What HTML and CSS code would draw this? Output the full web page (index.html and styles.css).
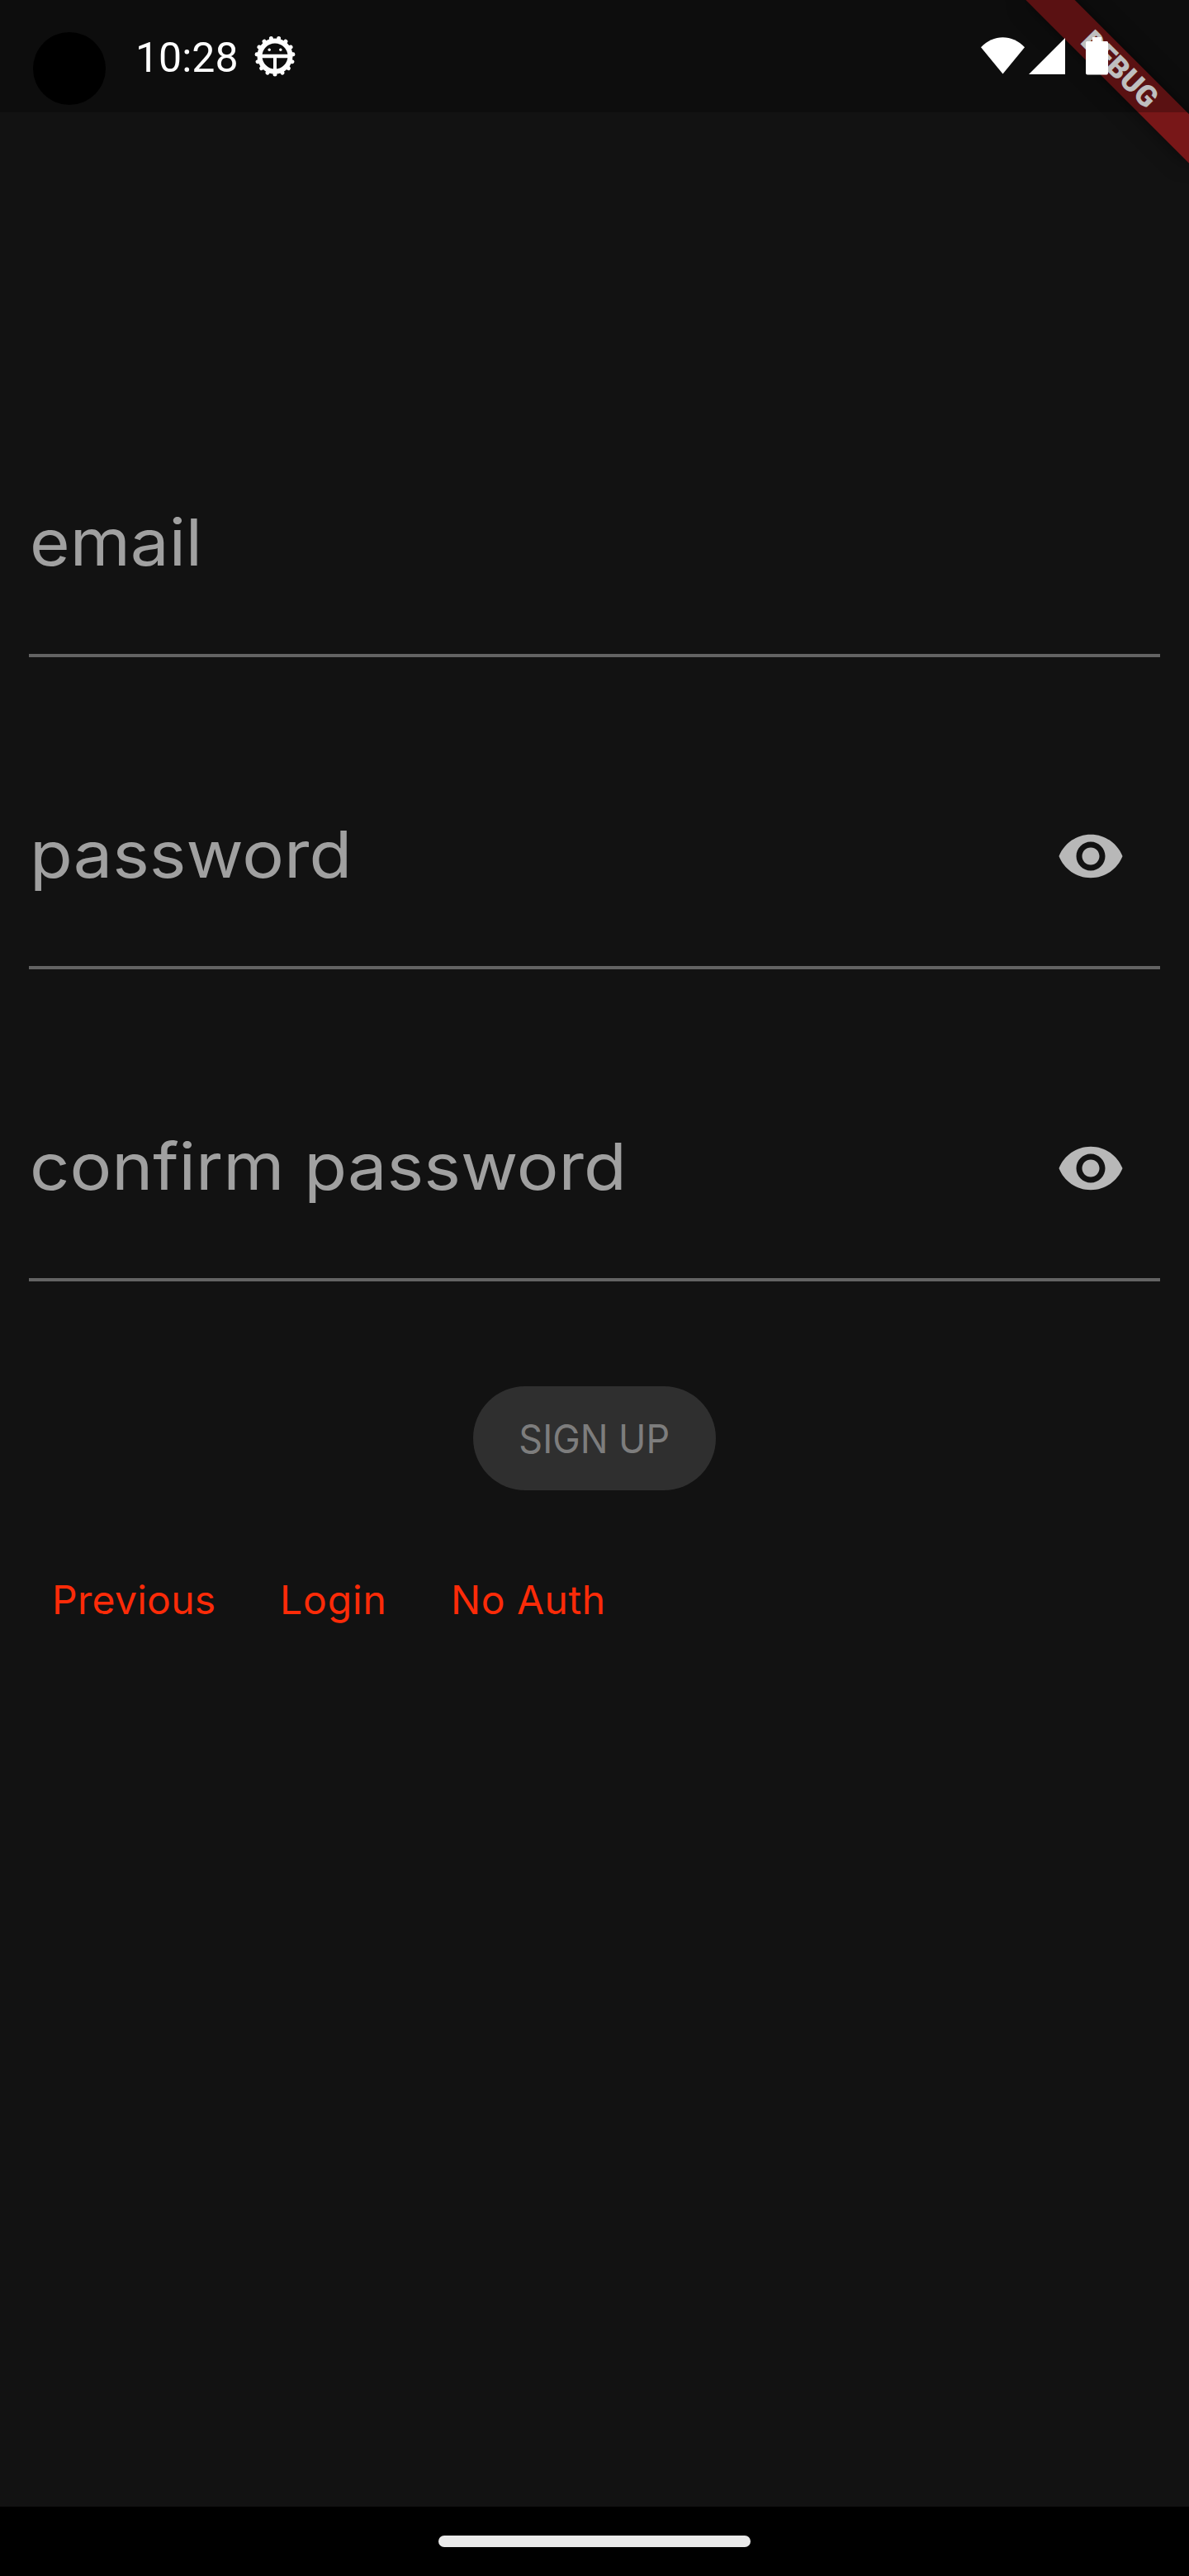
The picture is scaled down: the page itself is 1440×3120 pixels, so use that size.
FILE: index.html
```html
<!DOCTYPE html>
<html lang="en">
<head>
<meta charset="utf-8">
<title>Sign up</title>
<link rel="stylesheet" href="styles.css">
</head>
<body>
<div class="screen">
  <div class="debug-banner"><span>DEBUG</span></div>
  <header class="status-bar">
    <div class="camera"></div>
    <time class="clock">10:28</time>
    <svg class="gear" viewBox="-26 -26 52 52">
      <circle r="18.500" fill="none" stroke="#fff" stroke-width="6"/>
      <g stroke="#fff" stroke-width="5" stroke-linecap="round">
        <path id="tooth" d="M0 19V22"/>
        <use href="#tooth" transform="rotate(24)"/><use href="#tooth" transform="rotate(48)"/>
        <use href="#tooth" transform="rotate(72)"/><use href="#tooth" transform="rotate(96)"/>
        <use href="#tooth" transform="rotate(120)"/><use href="#tooth" transform="rotate(144)"/>
        <use href="#tooth" transform="rotate(168)"/><use href="#tooth" transform="rotate(192)"/>
        <use href="#tooth" transform="rotate(216)"/><use href="#tooth" transform="rotate(240)"/>
        <use href="#tooth" transform="rotate(264)"/><use href="#tooth" transform="rotate(288)"/>
        <use href="#tooth" transform="rotate(312)"/><use href="#tooth" transform="rotate(336)"/>
      </g>
      <path d="M-17 -2.200H17V2.200H2V17H-2V2.200H-17Z" fill="#fff"/>
      <circle cx="-6.800" cy="-7.700" r="1.700" fill="#fff"/><circle cx="6.800" cy="-7.700" r="1.700" fill="#fff"/>
    </svg>
    <svg class="indicators" viewBox="0 0 160 50" fill="#fff">
      <path d="M8 17.300C23 1.200 46 1.200 61 17.300L34.500 49.500Z"/>
      <path d="M66 50L110 6V50Z"/>
      <path d="M143 5h11v5h6.500q1.500 0 1.500 1.500v37q0 2-2 2h-23q-2 0-2-2v-37q0-1.500 1.500-1.500h6.500z"/>
    </svg>
  </header>
  <main class="form">
    <div class="field"><span class="label email">email</span></div>
    <div class="field"><span class="label password">password</span>
      <svg class="eye" viewBox="0 0 24 24"><path d="M12 4.500C7 4.500 2.730 7.610 1 12c1.730 4.390 6 7.500 11 7.500s9.270-3.110 11-7.500c-1.730-4.390-6-7.500-11-7.500zM12 17c-2.760 0-5-2.240-5-5s2.240-5 5-5 5 2.240 5 5-2.240 5-5 5zm0-8c-1.660 0-3 1.340-3 3s1.340 3 3 3 3-1.340 3-3-1.340-3-3-3z"/></svg></div>
    <div class="field"><span class="label confirm">confirm password</span>
      <svg class="eye" viewBox="0 0 24 24"><path d="M12 4.500C7 4.500 2.730 7.610 1 12c1.730 4.390 6 7.500 11 7.500s9.270-3.110 11-7.500c-1.730-4.390-6-7.500-11-7.500zM12 17c-2.760 0-5-2.240-5-5s2.240-5 5-5 5 2.240 5 5-2.240 5-5 5zm0-8c-1.660 0-3 1.340-3 3s1.340 3 3 3 3-1.340 3-3-1.340-3-3-3z"/></svg></div>
    <button class="submit" disabled><span>SIGN UP</span></button>
    <nav class="links"><a class="previous">Previous</a><a class="login">Login</a><a class="no-auth">No Auth</a></nav>
  </main>
  <footer class="nav-bar"><div class="handle"></div></footer>
</div>
</body>
</html>
```
FILE: styles.css
```css
* { box-sizing: border-box; }
body { margin: 0; background: #121212; }
.screen {
  position: relative;
  display: flex;
  flex-direction: column;
  width: 1440px;
  height: 3120px;
  overflow: hidden;
  background: #121212;
  font-family: Inter, "Liberation Sans", sans-serif;
}
.status-bar {
  position: relative;
  display: flex;
  align-items: flex-start;
  height: 136px;
  padding-left: 40px;
  background: rgba(0, 0, 0, .25);
}
.camera { width: 88px; height: 88px; margin-top: 39px; border-radius: 50%; background: #000; }
.clock { width: 142px; margin: 41px 0 0 36px; color: #fff; font: 50px/58px Roboto, sans-serif; }
.gear { width: 52px; height: 52px; margin: 42px 0 0 1px; }
.indicators { width: 160px; height: 50px; margin: 40px 100px 0 auto; overflow: visible; }

/* Ribbon across the top right corner, beneath the translucent status bar */
.debug-banner {
  position: absolute;
  top: 63px;
  left: 1216px;
  width: 280px;
  height: 42px;
  transform: rotate(45deg);
  background: #781718;
  box-shadow: 0 0 25px rgba(0, 0, 0, .5);
  color: #fff;
  font: 900 35.7px/42px Roboto, sans-serif;
  text-align: center;
}

.form { display: flex; flex-direction: column; flex: 1; padding: 282px 35px 0; }
.field {
  display: flex;
  align-items: flex-end;
  justify-content: space-between;
  height: 378px;
  padding: 0 42px 88px 1px;
  border-bottom: 4px solid #636363;
  color: #a0a0a0;
  font-size: 78px;
  line-height: 94px;
  white-space: nowrap;
}
/* Widened letterforms for the field labels */
.label { transform-origin: left; }
.email { transform: scaleX(1.07); }
.password { transform: scaleX(1.085); }
.confirm { transform: scaleX(1.086); }
.eye { width: 84px; height: 84px; margin-bottom: 3px; fill: #b8b8b8; }
.submit {
  align-self: center;
  width: 294px;
  height: 126px;
  margin-top: 127px;
  padding: 2px 0 0;
  border: 0;
  border-radius: 63px;
  background: #2f2f2f;
  color: #7d7d7d;
  font: 400 48px/58px Inter, sans-serif;
}
.submit span { display: inline-block; transform: scaleX(.935); }
.links { display: flex; margin-top: 104px; color: #fc2b08; font-size: 48px; line-height: 58px; white-space: nowrap; }
.previous { width: 276px; margin-left: 28px; letter-spacing: .3px; }
.login { width: 207px; letter-spacing: .9px; }
.no-auth { letter-spacing: .5px; }
.nav-bar { display: flex; justify-content: center; height: 84px; padding-top: 35px; background: #000; }
.handle { width: 378px; height: 14px; border-radius: 7px; background: #eaeaea; }
```
